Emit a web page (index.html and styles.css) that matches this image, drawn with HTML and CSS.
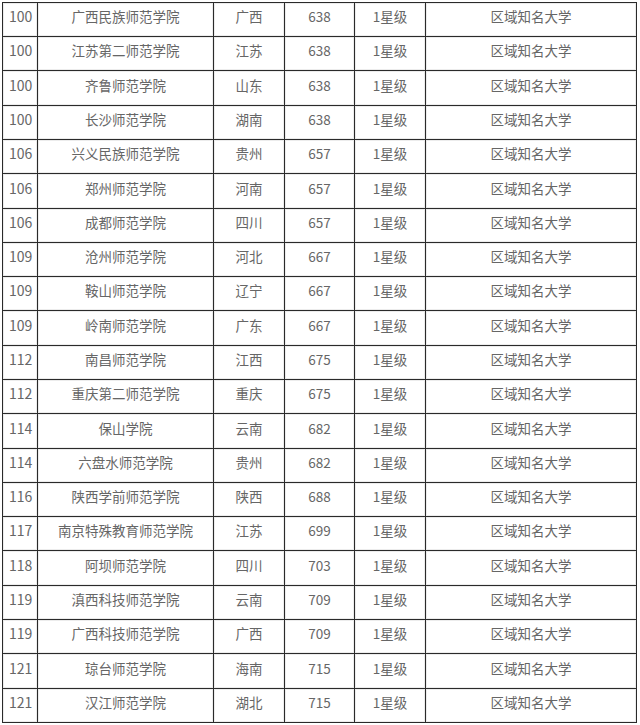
FILE: index.html
```html
<!DOCTYPE html>
<html lang="zh-CN">
<head>
<meta charset="utf-8">
<title>排名</title>
<link rel="stylesheet" href="styles.css">
</head>
<body>
<table class="rank">
  <colgroup>
    <col class="c-rank"><col class="c-name"><col class="c-prov"><col class="c-score"><col class="c-star"><col class="c-level">
  </colgroup>
  <tbody>
    <tr><td class="num">100</td><td>广西民族师范学院</td><td>广西</td><td>638</td><td>1星级</td><td>区域知名大学</td></tr>
    <tr><td class="num">100</td><td>江苏第二师范学院</td><td>江苏</td><td>638</td><td>1星级</td><td>区域知名大学</td></tr>
    <tr><td class="num">100</td><td>齐鲁师范学院</td><td>山东</td><td>638</td><td>1星级</td><td>区域知名大学</td></tr>
    <tr><td class="num">100</td><td>长沙师范学院</td><td>湖南</td><td>638</td><td>1星级</td><td>区域知名大学</td></tr>
    <tr><td class="num">106</td><td>兴义民族师范学院</td><td>贵州</td><td>657</td><td>1星级</td><td>区域知名大学</td></tr>
    <tr><td class="num">106</td><td>郑州师范学院</td><td>河南</td><td>657</td><td>1星级</td><td>区域知名大学</td></tr>
    <tr><td class="num">106</td><td>成都师范学院</td><td>四川</td><td>657</td><td>1星级</td><td>区域知名大学</td></tr>
    <tr><td class="num">109</td><td>沧州师范学院</td><td>河北</td><td>667</td><td>1星级</td><td>区域知名大学</td></tr>
    <tr><td class="num">109</td><td>鞍山师范学院</td><td>辽宁</td><td>667</td><td>1星级</td><td>区域知名大学</td></tr>
    <tr><td class="num">109</td><td>岭南师范学院</td><td>广东</td><td>667</td><td>1星级</td><td>区域知名大学</td></tr>
    <tr><td class="num">112</td><td>南昌师范学院</td><td>江西</td><td>675</td><td>1星级</td><td>区域知名大学</td></tr>
    <tr><td class="num">112</td><td>重庆第二师范学院</td><td>重庆</td><td>675</td><td>1星级</td><td>区域知名大学</td></tr>
    <tr><td class="num">114</td><td>保山学院</td><td>云南</td><td>682</td><td>1星级</td><td>区域知名大学</td></tr>
    <tr><td class="num">114</td><td>六盘水师范学院</td><td>贵州</td><td>682</td><td>1星级</td><td>区域知名大学</td></tr>
    <tr><td class="num">116</td><td>陕西学前师范学院</td><td>陕西</td><td>688</td><td>1星级</td><td>区域知名大学</td></tr>
    <tr><td class="num">117</td><td>南京特殊教育师范学院</td><td>江苏</td><td>699</td><td>1星级</td><td>区域知名大学</td></tr>
    <tr><td class="num">118</td><td>阿坝师范学院</td><td>四川</td><td>703</td><td>1星级</td><td>区域知名大学</td></tr>
    <tr><td class="num">119</td><td>滇西科技师范学院</td><td>云南</td><td>709</td><td>1星级</td><td>区域知名大学</td></tr>
    <tr><td class="num">119</td><td>广西科技师范学院</td><td>广西</td><td>709</td><td>1星级</td><td>区域知名大学</td></tr>
    <tr><td class="num">121</td><td>琼台师范学院</td><td>海南</td><td>715</td><td>1星级</td><td>区域知名大学</td></tr>
    <tr><td class="num">121</td><td>汉江师范学院</td><td>湖北</td><td>715</td><td>1星级</td><td>区域知名大学</td></tr>
  </tbody>
</table>
</body>
</html>
```
FILE: styles.css
```css
html, body {
  margin: 0;
  padding: 0;
  background: #ffffff;
}

body {
  padding: 2px 0 0 2px;
  font-family: "Noto Sans CJK SC", "Noto Sans", sans-serif;
  font-size: 13.5px;
  color: #666666;
}

.rank {
  border-collapse: collapse;
  table-layout: fixed;
  width: 634px;
}

.c-rank { width: 35px; }
.c-name { width: 176px; }
.c-prov { width: 71px; }
.c-score { width: 70px; }
.c-star { width: 71px; }
.c-level { width: 211px; }

.rank tr { height: 34px; }
.rank tr:nth-child(7n+3),
.rank tr:nth-child(7n+6) { height: 35px; }

.rank td {
  border: 1px solid #2a2a2a;
  padding: 0 0 7px 0;
  text-align: center;
  vertical-align: middle;
  line-height: 20px;
  white-space: nowrap;
  box-shadow: inset 0 0 0 1px #ececec;
}

.rank td.num {
  text-align: left;
  padding-left: 6px;
  font-size: 14px;
}
```
